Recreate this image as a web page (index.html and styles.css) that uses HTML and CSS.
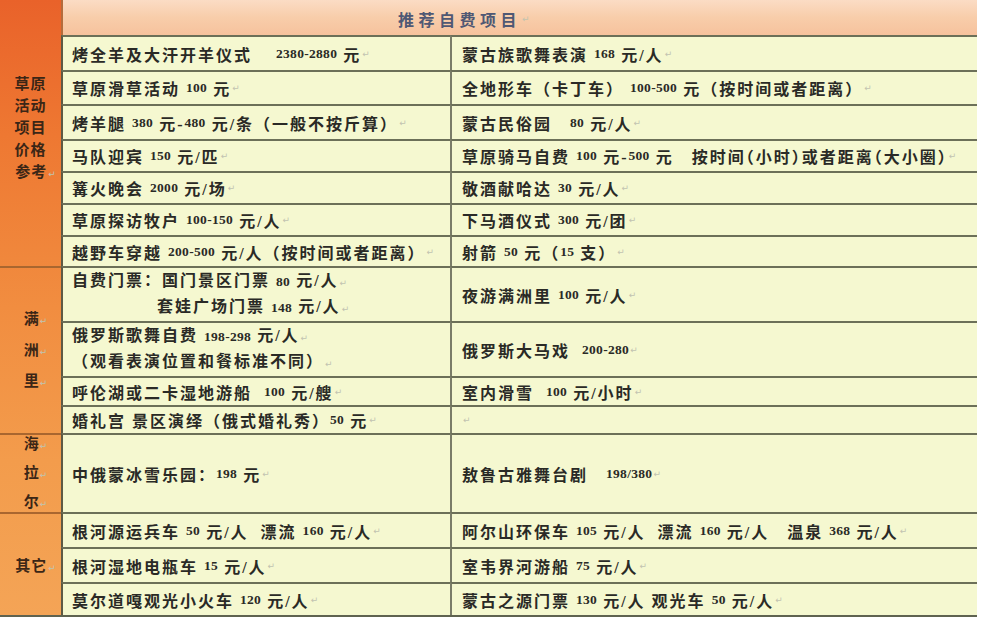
FILE: index.html
```html
<!DOCTYPE html>
<html lang="zh-CN">
<head>
<meta charset="utf-8">
<title>推荐自费项目</title>
<link rel="stylesheet" href="styles.css">
</head>
<body>
<div class="sheet">
  <div class="side grp-grass"><p>草原</p><p>活动</p><p>项目</p><p>价格</p><p>参考<i class="pm">↵</i></p></div>
  <div class="head">推荐自费项目<i class="pm">↵</i></div>

  <div class="c">烤全羊及大汗开羊仪式    <span class="n">2380-2880</span> 元<i class="pm">↵</i></div>
  <div class="c r">蒙古族歌舞表演 <span class="n">168</span> 元/人<i class="pm">↵</i></div>
  <div class="c">草原滑草活动 <span class="n">100</span> 元<i class="pm">↵</i></div>
  <div class="c r">全地形车（卡丁车） <span class="n">100-500</span> 元（按时间或者距离）<i class="pm">↵</i></div>
  <div class="c">烤羊腿 <span class="n">380</span> 元-<span class="n">480</span> 元/条（一般不按斤算）<i class="pm">↵</i></div>
  <div class="c r">蒙古民俗园   <span class="n">80</span> 元/人<i class="pm">↵</i></div>
  <div class="c">马队迎宾 <span class="n">150</span> 元/匹<i class="pm">↵</i></div>
  <div class="c r tight">草原骑马自费 <span class="n">100</span> 元-<span class="n">500</span> 元   按时间（小时）或者距离（大小圈）<i class="pm">↵</i></div>
  <div class="c">篝火晚会 <span class="n">2000</span> 元/场<i class="pm">↵</i></div>
  <div class="c r">敬酒献哈达 <span class="n">30</span> 元/人<i class="pm">↵</i></div>
  <div class="c">草原探访牧户 <span class="n">100-150</span> 元/人<i class="pm">↵</i></div>
  <div class="c r">下马酒仪式 <span class="n">300</span> 元/团<i class="pm">↵</i></div>
  <div class="c">越野车穿越 <span class="n">200-500</span> 元/人（按时间或者距离）<i class="pm">↵</i></div>
  <div class="c r">射箭 <span class="n">50</span> 元（<span class="n">15</span> 支）<i class="pm">↵</i></div>

  <div class="side grp grp-mzl"><p>满<i class="pm">↵</i></p><p>洲<i class="pm">↵</i></p><p>里<i class="pm">↵</i></p></div>
  <div class="c two"><p>自费门票：国门景区门票 <span class="n">80</span> 元/人<i class="pm">↵</i></p><p class="indent">套娃广场门票 <span class="n">148</span> 元/人<i class="pm">↵</i></p></div>
  <div class="c r">夜游满洲里 <span class="n">100</span> 元/人<i class="pm">↵</i></div>
  <div class="c two"><p>俄罗斯歌舞自费 <span class="n">198-298</span> 元/人<i class="pm">↵</i></p><p>（观看表演位置和餐标准不同）<i class="pm">↵</i></p></div>
  <div class="c r">俄罗斯大马戏  <span class="n">200-280</span><i class="pm">↵</i></div>
  <div class="c">呼伦湖或二卡湿地游船  <span class="n">100</span> 元/艘<i class="pm">↵</i></div>
  <div class="c r">室内滑雪  <span class="n">100</span> 元/小时<i class="pm">↵</i></div>
  <div class="c">婚礼宫 景区演绎（俄式婚礼秀）<span class="n">50</span> 元<i class="pm">↵</i></div>
  <div class="c r"><i class="pm">↵</i></div>

  <div class="side grp grp-hle"><p>海<i class="pm">↵</i></p><p>拉<i class="pm">↵</i></p><p>尔<i class="pm">↵</i></p></div>
  <div class="c">中俄蒙冰雪乐园：<span class="n">198</span> 元<i class="pm">↵</i></div>
  <div class="c r">敖鲁古雅舞台剧   <span class="n">198/380</span><i class="pm">↵</i></div>

  <div class="side grp grp-other"><p>其它<i class="pm">↵</i></p></div>
  <div class="c">根河源运兵车 <span class="n">50</span> 元/人  漂流 <span class="n">160</span> 元/人<i class="pm">↵</i></div>
  <div class="c r">阿尔山环保车 <span class="n">105</span> 元/人  漂流 <span class="n">160</span> 元/人   温泉 <span class="n">368</span> 元/人<i class="pm">↵</i></div>
  <div class="c">根河湿地电瓶车 <span class="n">15</span> 元/人<i class="pm">↵</i></div>
  <div class="c r">室韦界河游船 <span class="n">75</span> 元/人<i class="pm">↵</i></div>
  <div class="c">莫尔道嘎观光小火车 <span class="n">120</span> 元/人<i class="pm">↵</i></div>
  <div class="c r">蒙古之源门票 <span class="n">130</span> 元/人 观光车 <span class="n">50</span> 元/人<i class="pm">↵</i></div>
</div>
</body>
</html>
```

FILE: styles.css
```css
* { box-sizing: border-box; }

html, body {
  margin: 0;
  padding: 0;
  background: #ffffff;
}

body {
  font-family: "Liberation Serif", "Noto Sans CJK SC", serif;
  color: #2a2a26;
}

.sheet {
  display: grid;
  width: 977px;
  grid-template-columns: 61px 389px 527px;
  grid-template-rows: 35px 35px 34px 35px 32px 32px 32px 31px 55px 55px 29px 28px 79px 35px 35px 33px;
  border-bottom: 2px solid #5f6350;
  background:
    linear-gradient(180deg, #e9622a 0%, #ee7832 22%, #f18d40 50%, #f39c4c 75%, #f4a456 100%) 0 0 / 61px 100% no-repeat,
    #f5f8d0;
}

/* left orange group labels */
.side {
  grid-column: 1;
  display: flex;
  flex-direction: column;
  justify-content: center;
  align-items: center;
  font-family: "Noto Sans CJK SC", sans-serif;
  font-weight: 700;
  font-size: 15px;
  color: #3b2616;
  white-space: nowrap;
}
.side p { margin: 0; }
.side .pm { margin-right: -10px; }

.grp-grass { grid-row: 1 / span 8; line-height: 22px; padding-bottom: 10px; letter-spacing: 1px; }
.grp-mzl { grid-row: 9 / span 4; line-height: 27px; }
.grp-hle { grid-row: 13 / span 1; line-height: 25px; }
.grp-other { grid-row: 14 / span 3; letter-spacing: 1px; }

.grp { border-top: 2px solid #a9662f; }

/* title row */
.head {
  grid-column: 2 / span 2;
  grid-row: 1;
  display: flex;
  align-items: center;
  padding-left: 335px;
  padding-top: 2px;
  background: linear-gradient(180deg, #fbdcc4 0%, #f8cdaa 50%, #f6c29d 100%);
  border-left: 2px solid #b56c3c;
  font-family: "Noto Sans CJK SC", sans-serif;
  font-size: 16px;
  font-weight: 700;
  letter-spacing: 4.5px;
  color: #4f5874;
}

/* table cells */
.c {
  display: flex;
  align-items: center;
  padding-left: 9px;
  border-top: 2px solid #6c7058;
  border-left: 2px solid #5e5a44;
  background: #f5f8d0;
  font-size: 16px;
  font-weight: 700;
  letter-spacing: 2px;
  white-space: pre;
  overflow: hidden;
}

.c.r {
  padding-left: 10px;
  border-left: 2px solid #7a7c68;
}

.c.tight {
  font-feature-settings: "halt";
}

.c.two {
  flex-direction: column;
  justify-content: center;
  align-items: flex-start;
  line-height: 24px;
}
.c.two p { margin: 0; }
.c .indent { padding-left: 85px; }

.n {
  font-size: 13.5px;
  letter-spacing: 0.3px;
}

.pm {
  font-family: "DejaVu Sans", sans-serif;
  font-style: normal;
  font-weight: 400;
  font-size: 9px;
  letter-spacing: 0;
  color: #c2c3b0;
  margin-left: 1px;
}
```
